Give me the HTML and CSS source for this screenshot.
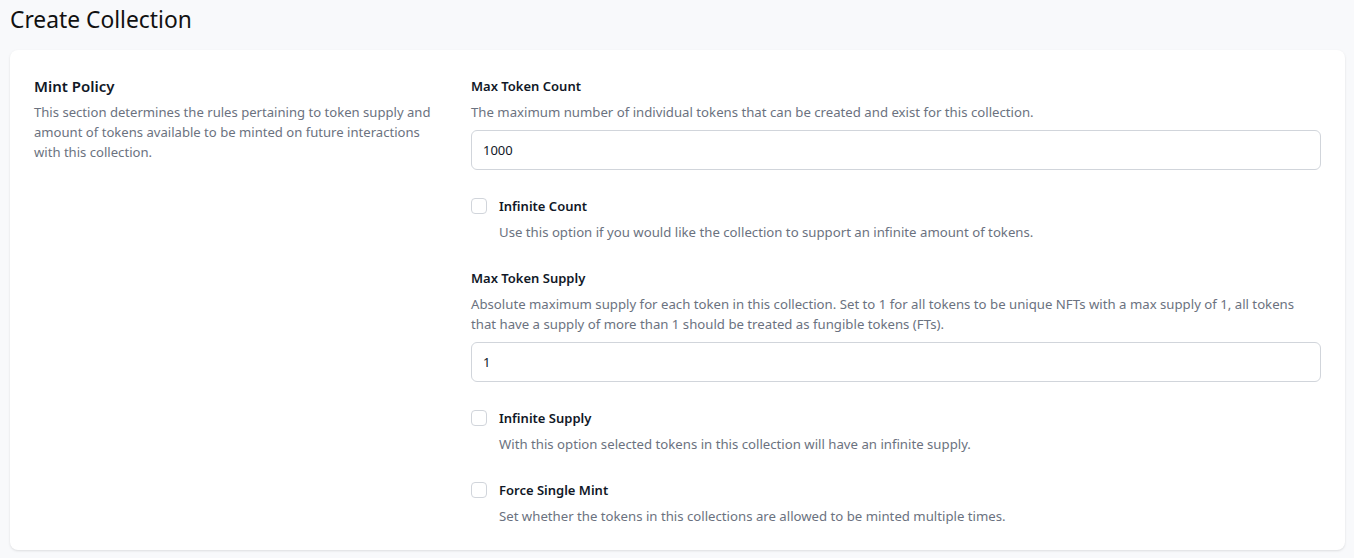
FILE: index.html
```html
<!DOCTYPE html>
<html lang="en">
<head>
<meta charset="utf-8">
<title>Create Collection</title>
<link rel="stylesheet" href="styles.css">
</head>
<body>
<header class="page-header">
  <h1 class="page-title">Create Collection</h1>
</header>
<main class="card">
  <section class="intro">
    <h2 class="intro-title">Mint Policy</h2>
    <p class="intro-text">This section determines the rules pertaining to token supply and amount of tokens available to be minted on future interactions with this collection.</p>
  </section>
  <section class="fields">
    <div class="field">
      <label class="field-label" for="count">Max Token Count</label>
      <p class="field-help">The maximum number of individual tokens that can be created and exist for this collection.</p>
      <input class="text-input" id="count" type="text" value="1000">
    </div>
    <div class="check">
      <div class="check-row">
        <span class="box"></span>
        <span class="check-label">Infinite Count</span>
      </div>
      <p class="check-help">Use this option if you would like the collection to support an infinite amount of tokens.</p>
    </div>
    <div class="field">
      <label class="field-label" for="supply">Max Token Supply</label>
      <p class="field-help">Absolute maximum supply for each token in this collection. Set to 1 for all tokens to be unique NFTs with a max supply of 1, all tokens that have a supply of more than 1 should be treated as fungible tokens (FTs).</p>
      <input class="text-input" id="supply" type="text" value="1">
    </div>
    <div class="check">
      <div class="check-row">
        <span class="box"></span>
        <span class="check-label">Infinite Supply</span>
      </div>
      <p class="check-help">With this option selected tokens in this collection will have an infinite supply.</p>
    </div>
    <div class="check">
      <div class="check-row">
        <span class="box"></span>
        <span class="check-label">Force Single Mint</span>
      </div>
      <p class="check-help">Set whether the tokens in this collections are allowed to be minted multiple times.</p>
    </div>
  </section>
</main>
</body>
</html>
```
FILE: styles.css
```css
* { box-sizing: border-box; }
html, body { margin: 0; padding: 0; }
body {
  background: #f8f9fb;
  font-family: "Noto Sans", "Open Sans", sans-serif;
  color: #111827;
  height: 558px;
  overflow: hidden;
}
.page-header {
  padding: 4px 10px 0;
  height: 50px;
}
.page-title {
  margin: 0;
  font-size: 22.8px;
  line-height: 32px;
  font-weight: 400;
  color: #111;
}
.card {
  margin: 0 9px 0 10px;
  background: #fff;
  border-radius: 8px;
  box-shadow: 0 1px 3px rgba(0,0,0,0.08), 0 1px 2px rgba(0,0,0,0.04);
  padding: 24px;
  display: grid;
  grid-template-columns: repeat(3, minmax(0, 1fr));
  column-gap: 24px;
}
.intro-title {
  margin: 0;
  font-size: 15px;
  line-height: 24px;
  font-weight: 600;
  color: #111827;
}
.intro-text {
  margin: 4px 0 0;
  font-size: 13.1px;
  line-height: 20px;
  color: #6b7280;
}
.fields {
  grid-column: span 2;
  display: flex;
  flex-direction: column;
  gap: 24px;
}
.field-label {
  display: block;
  font-size: 13px;
  line-height: 24px;
  font-weight: 600;
  color: #111827;
}
.field-help {
  margin: 4px 0 0;
  font-size: 13.2px;
  line-height: 20px;
  color: #6b7280;
}
.text-input {
  display: block;
  width: 100%;
  height: 40px;
  margin-top: 8px;
  padding: 0 11px;
  border: 1px solid #d1d5db;
  border-radius: 6px;
  font: inherit;
  font-size: 13px;
  color: #111827;
  background: #fff;
}
.check-row {
  display: flex;
  align-items: center;
  gap: 12px;
  height: 24px;
}
.box {
  width: 16px;
  height: 16px;
  border: 1px solid #d1d5db;
  border-radius: 4px;
  background: #fff;
}
.check-label {
  font-size: 13px;
  font-weight: 600;
  line-height: 24px;
}
.check-help {
  margin: 4px 0 0 28px;
  font-size: 13.2px;
  line-height: 20px;
  color: #6b7280;
}
```
